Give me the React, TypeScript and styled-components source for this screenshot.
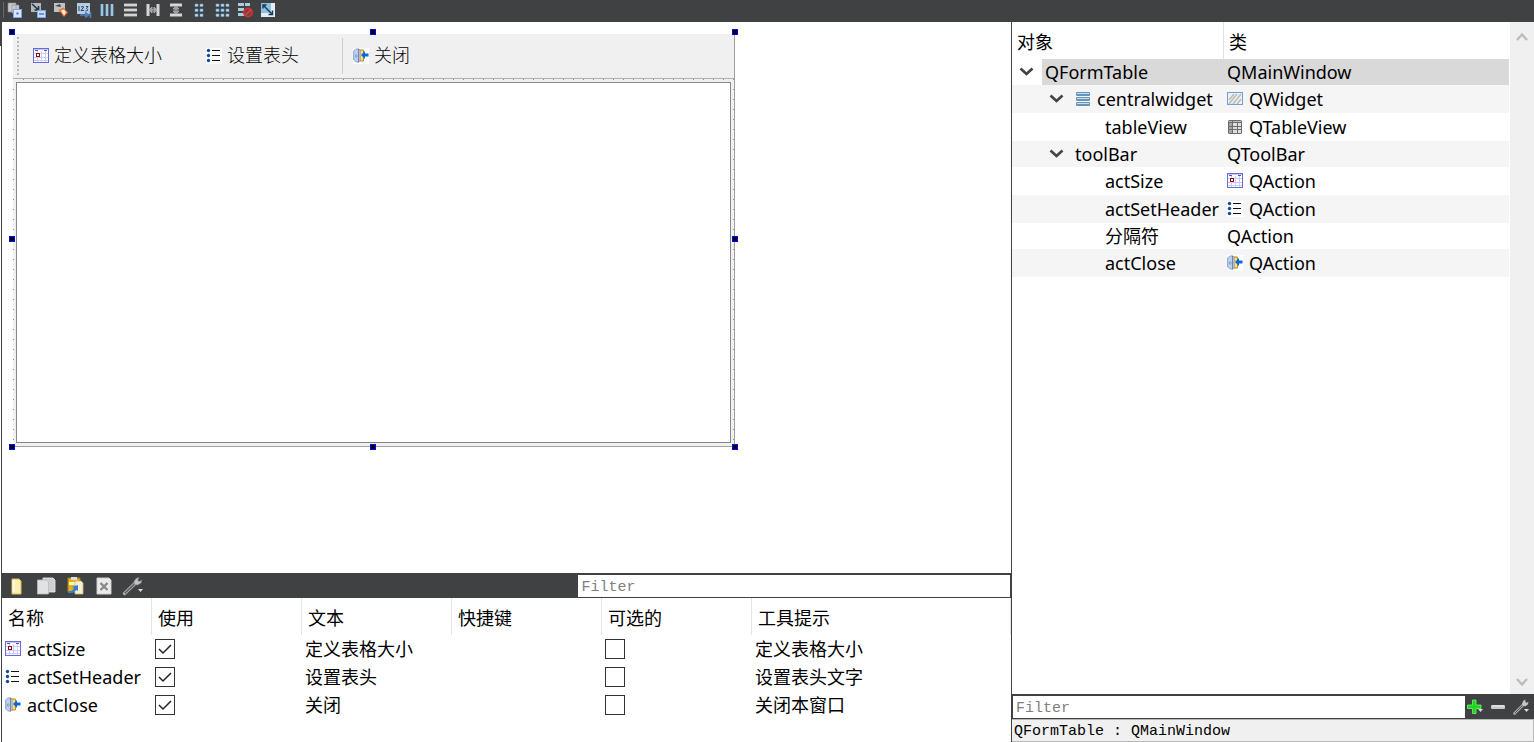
import React from 'react';
import styled, { createGlobalStyle } from 'styled-components';

const Global = createGlobalStyle`
  *, *::before, *::after { box-sizing: border-box; }
  body {
    margin: 0;
    background: #fff;
    color: #000;
    font: 18px/26px "Noto Sans", "Noto Sans CJK SC", sans-serif;
  }
  button, input { font: inherit; color: inherit; margin: 0; }
`;

const DARK = '#404142';

const Page = styled.div`
  min-height: 100vh;
  display: flex;
  flex-direction: column;
`;

const MainBar = styled.header`
  flex: none;
  height: 22px;
  display: flex;
  align-items: flex-start;
  gap: 7px;
  padding-left: 3px;
  background: ${DARK};
`;

const BarEdge = styled.span`
  width: 1px;
  height: 16px;
  margin: 2px -4px 0 0;
  background: #6a6a6a;
`;

const IconButton = styled.button<{ $w?: number; $h?: number }>`
  flex: none;
  display: flex;
  align-items: center;
  justify-content: center;
  width: ${(p) => p.$w ?? 16}px;
  height: ${(p) => p.$h ?? 20}px;
  padding: 0;
  border: 0;
  background: none;
`;

const Workspace = styled.div`
  flex: 1;
  display: grid;
  grid-template-columns: minmax(0, 1011fr) minmax(0, 523fr);
  background: linear-gradient(${DARK}, ${DARK}) 0 0 / 1px 24px no-repeat;
`;

const LeftPane = styled.main`
  display: flex;
  flex-direction: column;
  margin-left: 1px;
  border-left: 1px solid ${DARK};
`;

const RightPane = styled.aside`
  display: flex;
  flex-direction: column;
  border-left: 1px solid ${DARK};
`;

const Canvas = styled.section`
  flex: 1;
  padding: 12px 0 0 11px;
`;

const FormWindow = styled.div`
  position: relative;
  width: 722px;
  height: 413px;
  display: flex;
  flex-direction: column;
  background: #f0f0f0;
  border-right: 1px solid #a0a0a0;
  border-bottom: 1px solid #a0a0a0;
`;

const FormToolBar = styled.div`
  flex: none;
  height: 45px;
  display: flex;
  align-items: center;
  padding-left: 4px;
  border-bottom: 1px solid #b0b0b0;
  font-family: "Liberation Serif", "Noto Sans CJK SC", serif;
  font-weight: 300;
`;

const Grip = styled.span`
  width: 2px;
  height: 38px;
  margin-right: 14px;
  background: repeating-linear-gradient(#b8b8b8 0 2px, transparent 2px 4px);
`;

const FormAction = styled.button<{ $gap: number }>`
  display: flex;
  align-items: center;
  gap: 5px;
  height: 28px;
  padding: 0;
  margin-right: ${(p) => p.$gap}px;
  border: 0;
  background: none;
  white-space: nowrap;
`;

const Separator = styled.span`
  width: 1px;
  height: 36px;
  margin-right: 10px;
  background: #cfcfcf;
`;

const FormBody = styled.div`
  flex: 1;
  display: flex;
  padding: 3px;
  background:
    repeating-linear-gradient(90deg, transparent 0 9px, #909090 9px 10px) 1px 0 / 100% 1px no-repeat,
    repeating-linear-gradient(transparent 0 9px, #909090 9px 10px) 0 1px / 1px 100% no-repeat,
    repeating-linear-gradient(transparent 0 9px, #909090 9px 10px) 100% 1px / 1px 100% no-repeat,
    #f0f0f0;
`;

const TableView = styled.div`
  flex: 1;
  background: #fff;
  border: 1px solid #828790;
`;

const Handle = styled.span<{ $x: string; $y: string }>`
  position: absolute;
  left: ${(p) => p.$x};
  top: ${(p) => p.$y};
  width: 6px;
  height: 6px;
  background: #000;
  border: 1px solid #00f;
`;

const ActionBar = styled.div`
  flex: none;
  height: 25px;
  display: grid;
  grid-template-columns: minmax(0, 577fr) minmax(0, 432fr);
  padding-right: 1px;
  background: ${DARK};
`;

const ActionTools = styled.div`
  display: flex;
  align-items: center;
  gap: 5px;
  padding-left: 3px;
`;

const FilterInput = styled.input`
  width: 100%;
  height: 22px;
  align-self: center;
  padding: 3px 3px 0;
  border: 0;
  border-radius: 0;
  outline: 0;
  background: #fff;
  font: 15px/18px "Liberation Mono", monospace;
  &::placeholder { color: #808080; opacity: 1; }
`;

const ActionPanel = styled.section`
  flex: none;
  height: 144px;
`;

const ActionTable = styled.table`
  width: 100%;
  table-layout: fixed;
  border-collapse: separate;
  border-spacing: 0;
  th {
    height: 37px;
    padding: 2px 6px 0;
    text-align: left;
    font-weight: 400;
    border-right: 1px solid #e5e5e5;
    white-space: nowrap;
  }
  td {
    height: 28px;
    padding: 0 3px;
    white-space: nowrap;
  }
`;

const Cell = styled.div<{ $gap?: number; $indent?: number }>`
  display: flex;
  align-items: center;
  gap: ${(p) => p.$gap ?? 6}px;
  padding-left: ${(p) => p.$indent ?? 0}px;
  svg { flex: none; }
`;

const Check = styled.input`
  appearance: none;
  display: block;
  width: 20px;
  height: 20px;
  border: 1px solid #333;
  background: #fff;
  &:checked {
    background: #fff url("data:image/svg+xml,%3Csvg xmlns='http://www.w3.org/2000/svg' viewBox='0 0 18 18'%3E%3Cpath d='M3 9l4 4 8-8' fill='none' stroke='%23222' stroke-width='1.5'/%3E%3C/svg%3E");
  }
`;

const TreeArea = styled.div`
  flex: 1;
  display: flex;
`;

const TreeTable = styled.table`
  flex: 1;
  align-self: flex-start;
  display: table;
  table-layout: fixed;
  border-collapse: separate;
  border-spacing: 0;
  th {
    height: 37px;
    padding: 2px 5px 0;
    text-align: left;
    font-weight: 400;
    white-space: nowrap;
  }
  th:first-child { border-right: 1px solid #e0e0e0; }
  td { padding: 0 0 0 3px; white-space: nowrap; }
  td:first-child { padding: 0; }
`;

const TreeRow = styled.tr<{ $icon: boolean; $alt: boolean; $selected: boolean }>`
  height: ${(p) => (p.$icon ? 28 : 26)}px;
  background: ${(p) => (p.$alt ? '#f5f5f5' : '#fff')};
  td { background: ${(p) => (p.$selected ? '#d9d9d9' : 'transparent')}; }
  td:first-child {
    background: ${(p) => (p.$selected ? 'linear-gradient(90deg, #fff 30px, #d9d9d9 30px)' : 'transparent')};
  }
`;

const ScrollTrack = styled.div`
  flex: none;
  width: 25px;
  display: flex;
  flex-direction: column;
  justify-content: space-between;
  align-items: center;
  padding: 5px 0 2px;
  background: #f0f0f0;
  border-left: 1px solid #fff;
`;

const PropertyBar = styled.div`
  flex: none;
  height: 25px;
  display: flex;
  align-items: center;
  gap: 7px;
  padding: 0 5px 0 1px;
  background: ${DARK};
`;

const PropertyFilter = styled(FilterInput)`
  flex: 1;
  min-width: 0;
  margin-right: -5px;
`;

const StatusLine = styled.div`
  flex: none;
  height: 23px;
  padding: 0 2px;
  background: #f0f0f0;
  border: 1px solid #b8b8b8;
  border-left: 0;
  font: 15px/24px "Liberation Mono", monospace;
`;

type S = { children: React.ReactNode; w?: number; h?: number };
const Svg = ({ children, w = 16, h = 16 }: S) => (
  <svg width={w} height={h} viewBox={`0 0 ${w} ${h}`} aria-hidden="true">{children}</svg>
);

const SizeIcon = () => (
  <Svg>
    <rect width="16" height="15" fill="#fff" />
    <path d="M4.500 3v11M8.500 3v11M12.500 3v11M1 5.500h14M1 9.500h14M1 12.500h14" stroke="#ccccfa" />
    <rect x=".5" y=".5" width="15" height="14" fill="none" stroke="#6a6ad0" />
    <path d="M1 1.500h14" stroke="#c8c8f4" />
    <path d="M2 2.500h3M11 2.500h3" stroke="#5555b0" />
    <rect x="3.500" y="5.500" width="3" height="3" fill="#fff" stroke="#900010" />
  </Svg>
);

const HeaderIcon = () => (
  <Svg>
    <rect width="16" height="16" fill="#fff" />
    <path d="M6 2.500h8M6 7.500h8M6 12.500h8" stroke="#111" />
    <g fill="#1148a0">
      <circle cx="2.500" cy="2.500" r="1.700" />
      <circle cx="2.500" cy="7.500" r="1.700" />
      <circle cx="2.500" cy="12.500" r="1.700" />
    </g>
  </Svg>
);

const CloseIcon = () => (
  <Svg>
    <rect width="16" height="16" fill="#fff" />
    <path d="M6 2h4.500v11H6z" fill="#f7dc8a" stroke="#b98b1c" />
    <path d="M.6 3Q2 .8 5.500 .7v13.800Q2 14 .6 12z" fill="#b9d0f2" stroke="#7f95c5" strokeWidth=".8" />
    <path d="M5.500 1l1.500 1.500v10L5.500 14z" fill="#dfe8f8" stroke="#5a6c98" strokeWidth=".7" />
    <circle cx="3.200" cy="8" r="1" fill="#fff" stroke="#4a5c88" strokeWidth=".6" />
    <path d="M8 7l4-4v2.500h3.500v3H12V11z" fill="#0868d8" />
  </Svg>
);

const LayoutIcon = () => (
  <Svg>
    {[1, 6, 11].map((y) => (
      <g key={y}>
        <rect x="1" y={y} width="14" height="4" rx="1" fill="#6a93b8" />
        <path d={`M2 ${y + 1}.5h12`} stroke="#c2def2" />
      </g>
    ))}
  </Svg>
);

const WidgetIcon = () => (
  <Svg>
    <rect x=".5" y="1.500" width="15" height="12" fill="#f0f0ee" stroke="#6f9ddc" />
    <path d="M2 9l5-6M2 13l8-10M6 13l8-10M10 13l4-5" stroke="#bcbcb8" strokeWidth="1.600" />
  </Svg>
);

const GridIcon = () => (
  <Svg>
    <rect x="1" y="1" width="14" height="14" rx="1.500" fill="#6c6c6c" />
    <path d="M2 2.500h3M6 2.500h8" stroke="#bbb" />
    <path d="M2 4h3v3H2zM2 8h3v2H2zM2 11h3v3H2z" fill="#a6a6a6" />
    <path d="M6 4h4v3H6zM11 4h3v3h-3zM6 8h4v2H6zM11 8h3v2h-3zM6 11h4v3H6zM11 11h3v3h-3z" fill="#dedede" />
  </Svg>
);

const Chevron = () => (
  <Svg w={15} h={10}><path d="M1.500 1.500l6 5.500 6-5.500" fill="none" stroke="#444" strokeWidth="2.600" /></Svg>
);

const ScrollArrow = ({ up = false }: { up?: boolean }) => (
  <Svg w={14} h={20}>
    <path d={up ? 'M2 13l5-5.500 5 5.500' : 'M2 7l5 5.500 5-5.500'} fill="none" stroke="#bcbcbc" strokeWidth="2.400" />
  </Svg>
);

const Wrench = () => (
  <Svg w={22} h={20}>
    <path d="M2.500 17.500L13 7.500" stroke="#aaa" strokeWidth="3.400" strokeLinecap="round" />
    <path d="M2.800 17.200L13 7.500" stroke="#555" strokeWidth="1.200" />
    <path d="M17 1.500l-3 1-2 3 .5 3 3 .5 3.500-2 .8-3-2.300 1.500-1.800-1z" fill="#c4c4c4" stroke="#8a8a8a" strokeWidth=".6" />
    <path d="M16 13h5l-2.500 3z" fill="#ddd" />
  </Svg>
);

const SmallWrench = () => (
  <Svg>
    <path d="M1.500 14.500L10 6" stroke="#aaa" strokeWidth="2.600" strokeLinecap="round" />
    <path d="M1.800 14.200L10 6" stroke="#555" />
    <path d="M12.500 .5l-2.500 1.500-1 3 1 2 2.500.3 2.500-2 .5-2.500-1.800 1-1.300-.8z" fill="#c4c4c4" />
    <path d="M11 10h5l-2.500 3z" fill="#ddd" />
  </Svg>
);

const Plus = () => (
  <Svg>
    <path d="M5.500 1h3.500v5h5v3.500h-5v5H5.500v-5h-5V6h5z" fill="#18d818" stroke="#7cf07c" strokeWidth=".8" />
    <path d="M11 10h5l-2.500 3z" fill="#ddd" />
  </Svg>
);

const Minus = () => (
  <Svg><rect x="1" y="6" width="14" height="4" rx="1" fill="#c9c9c9" /><path d="M2 7h12" stroke="#eee" /></Svg>
);

const mainTools: [string, React.ReactNode][] = [
  ['Edit Widgets', <>
    <path d="M1 1h8v9H1zM5 3h7v8H5z" fill="#c6c8ca" stroke="#8b8d90" strokeWidth=".6" />
    <rect x="6.500" y="7.500" width="8" height="8" fill="#d8e6ff" stroke="#7da2e8" />
    <rect x="9.500" y="10.500" width="2" height="2" fill="#3464c8" />
  </>],
  ['Edit Signals/Slots', <>
    <path d="M1 1h10v9H1z" fill="#b4b8bb" />
    <path d="M2 2l6 5.500M8.500 4v4H4.500" stroke="#183848" strokeWidth="1.600" fill="none" />
    <rect x="7.500" y="8.500" width="8" height="7" fill="#c9dcfa" stroke="#7da2e8" />
    <path d="M9 12h5" stroke="#4a78c8" strokeWidth="1.500" />
  </>],
  ['Edit Buddies', <>
    <path d="M1 1h11v9H1z" fill="#bfc1c3" />
    <path d="M2 4l5-2 1 3z" fill="#444" />
    <path d="M5.500 8l5-2.500 4.500 5-4 4.500z" fill="#f07030" />
    <path d="M8 8.500l3-1 2 3-2 3z" fill="#fff0e0" />
  </>],
  ['Edit Tab Order', <>
    <path d="M1 1h13v11H1z" fill="#b9cbdc" />
    <path d="M3 4v5M5 5q3.500-1.500 2 1l-2 2.500h3M10 4.500h2L10.500 6.500q3 2-1 2.500" fill="none" stroke="#1a4a78" />
    <path d="M4 13h7M9 10.500l3.500 2.500L9 15.500M14.500 10v6" fill="none" stroke="#4d83c4" strokeWidth="1.600" />
  </>],
  ['Lay Out Horizontally', <>
    <path d="M3 2v12M8 2v12M13 2v12" stroke="#6b9fc4" strokeWidth="3" />
    <path d="M3 2v12M8 2v12M13 2v12" stroke="#d4ebfb" />
  </>],
  ['Lay Out Vertically', <>
    <path d="M2 3h13M2 8h13M2 13h13" stroke="#b4b4b2" strokeWidth="3" />
    <path d="M2 3h13M2 8h13M2 13h13" stroke="#f2f2f0" />
  </>],
  ['Horizontal Splitter', <>
    <path d="M3 2v12M13 2v12" stroke="#d6d6d6" strokeWidth="3" />
    <path d="M4 8l3-3v6zM12 8L9 5v6zM6 8h4" fill="#999" stroke="#aaa" />
  </>],
  ['Vertical Splitter', <>
    <path d="M2 3h12M2 13h12" stroke="#d6d6d6" strokeWidth="3" />
    <path d="M8 4L5 7h6zM8 12L5 9h6zM8 6v4" fill="#999" stroke="#aaa" />
  </>],
  ['Form Layout', <>
    {[2, 7, 12].map((y) => <path key={y} d={`M4 ${y}h3v2.500H4zM9 ${y}h3v2.500H9z`} fill="#bcdcf2" stroke="#6b9fc4" strokeWidth=".6" />)}
  </>],
  ['Grid Layout', <>
    {[2, 7, 12].map((y) => <path key={y} d={`M2 ${y}h3v2.500H2zM7 ${y}h3v2.500H7zM12 ${y}h3v2.500h-3z`} fill="#bcdcf2" stroke="#6b9fc4" strokeWidth=".6" />)}
  </>],
  ['Break Layout', <>
    <path d="M1 1h6v3H1zM8 1h5v3H8zM1 6h6v3H1zM1 11h6v3H1z" fill="#a9cde6" />
    <circle cx="11" cy="10.500" r="4.200" fill="#7c4040" stroke="#d83030" strokeWidth="1.600" />
    <path d="M8 13.500l6-6" stroke="#e04040" strokeWidth="1.600" />
  </>],
  ['Adjust Size', <>
    <rect x="1" y="1" width="14" height="14" fill="#e4ecf4" />
    <path d="M1 1h10v10H1z" fill="#8fc0e4" />
    <path d="M4 4l8 8M3 6.500V3h3.500M12.500 8.500V12.500H8.500" stroke="#14384c" strokeWidth="1.400" fill="none" />
  </>],
];

const actionTools: [string, React.ReactNode][] = [
  ['New', <><path d="M5 3h7l2 2v13H5z" fill="#fbeeb0" stroke="#d9bd62" /><path d="M6.500 4v12" stroke="#fffbe4" strokeWidth="2" /></>],
  ['Copy', <><path d="M7 2h10l2 2v12H7z" fill="#cfcfcf" stroke="#eee" strokeWidth=".8" /><path d="M1.500 4h9l2 2v12h-11z" fill="#e2e2e2" stroke="#bbb" strokeWidth=".8" /></>],
  ['Paste', <>
    <path d="M3 2h12v14H3z" fill="#e0b020" stroke="#a87c10" />
    <path d="M6 1h6v3H6z" fill="#ddd" /><path d="M4 6h7v3H4z" fill="#fff3b8" />
    <path d="M10 5h6l2 2v11h-8z" fill="#f8efcf" stroke="#c8b888" strokeWidth=".8" />
    <path d="M3 15q4 1 6-3l-2-1 6-2v6l-2-1q-3 4-8 3z" fill="#2f7fd8" />
  </>],
  ['Delete', <><path d="M3 2h12l2 2v14H3z" fill="#ebebeb" stroke="#ccc" /><path d="M6.500 7l7 7M13.500 7l-7 7" stroke="#888" strokeWidth="2.400" /></>],
];

const actions = [
  { icon: <SizeIcon />, name: 'actSize', text: '定义表格大小', tip: '定义表格大小' },
  { icon: <HeaderIcon />, name: 'actSetHeader', text: '设置表头', tip: '设置表头文字' },
  { icon: <CloseIcon />, name: 'actClose', text: '关闭', tip: '关闭本窗口' },
];

type Node = { name: string; cls: string; indent: number; open?: boolean; nameIcon?: React.ReactNode; icon?: React.ReactNode };
const nodes: Node[] = [
  { name: 'QFormTable', cls: 'QMainWindow', indent: 7, open: true },
  { name: 'centralwidget', cls: 'QWidget', indent: 37, open: true, nameIcon: <LayoutIcon />, icon: <WidgetIcon /> },
  { name: 'tableView', cls: 'QTableView', indent: 93, icon: <GridIcon /> },
  { name: 'toolBar', cls: 'QToolBar', indent: 37, open: true },
  { name: 'actSize', cls: 'QAction', indent: 93, icon: <SizeIcon /> },
  { name: 'actSetHeader', cls: 'QAction', indent: 93, icon: <HeaderIcon /> },
  { name: '分隔符', cls: 'QAction', indent: 93 },
  { name: 'actClose', cls: 'QAction', indent: 93, icon: <CloseIcon /> },
];

const xs = ['-4px', '357px', '719px'];
const ys = ['-5px', '202px', '410px'];

export default function App() {
  return (
    <Page>
      <Global />
      <MainBar>
        <BarEdge />
        {mainTools.map(([label, art]) => (
          <IconButton key={label} aria-label={label}><Svg>{art}</Svg></IconButton>
        ))}
      </MainBar>
      <Workspace>
        <LeftPane>
          <Canvas>
            <FormWindow>
              <FormToolBar>
                <Grip />
                <FormAction $gap={44}><SizeIcon />定义表格大小</FormAction>
                <FormAction $gap={43}><HeaderIcon />设置表头</FormAction>
                <Separator />
                <FormAction $gap={0}><CloseIcon />关闭</FormAction>
              </FormToolBar>
              <FormBody><TableView /></FormBody>
              {ys.map((y, r) => xs.map((x, c) => (r === 1 && c === 1 ? null : <Handle key={x + y} $x={x} $y={y} />)))}
            </FormWindow>
          </Canvas>
          <ActionBar>
            <ActionTools>
              {actionTools.map(([label, art]) => (
                <IconButton key={label} aria-label={label} $w={24}><Svg w={20} h={20}>{art}</Svg></IconButton>
              ))}
              <IconButton aria-label="Configure" $w={24}><Wrench /></IconButton>
            </ActionTools>
            <FilterInput aria-label="Filter actions" placeholder="Filter" />
          </ActionBar>
          <ActionPanel>
            <ActionTable>
              <colgroup>
                {[0, 1, 2, 3, 4].map((i) => <col key={i} width="150" />)}
                <col />
              </colgroup>
              <thead>
                <tr>{['名称', '使用', '文本', '快捷键', '可选的', '工具提示'].map((h) => <th key={h} scope="col">{h}</th>)}</tr>
              </thead>
              <tbody>
                {actions.map((a) => (
                  <tr key={a.name}>
                    <td><Cell>{a.icon}{a.name}</Cell></td>
                    <td><Check type="checkbox" defaultChecked aria-label={`${a.name} 使用`} /></td>
                    <td>{a.text}</td>
                    <td />
                    <td><Check type="checkbox" aria-label={`${a.name} 可选的`} /></td>
                    <td>{a.tip}</td>
                  </tr>
                ))}
              </tbody>
            </ActionTable>
          </ActionPanel>
        </LeftPane>
        <RightPane>
          <TreeArea>
            <TreeTable>
              <colgroup><col width="212" /><col /></colgroup>
              <thead><tr><th scope="col">对象</th><th scope="col">类</th></tr></thead>
              <tbody>
                {nodes.map((n, i) => (
                  <TreeRow key={n.name} $icon={!!n.icon} $alt={i % 2 === 1} $selected={i === 0}>
                    <td>
                      <Cell $indent={n.indent} $gap={n.nameIcon ? 6 : 11}>
                        {n.open && <Chevron />}
                        {n.nameIcon && <Cell $indent={5}>{n.nameIcon}</Cell>}
                        {n.name}
                      </Cell>
                    </td>
                    <td><Cell>{n.icon}{n.cls}</Cell></td>
                  </TreeRow>
                ))}
              </tbody>
            </TreeTable>
            <ScrollTrack><ScrollArrow up /><ScrollArrow /></ScrollTrack>
          </TreeArea>
          <PropertyBar>
            <PropertyFilter aria-label="Filter properties" placeholder="Filter" />
            <IconButton aria-label="Add"><Plus /></IconButton>
            <IconButton aria-label="Remove"><Minus /></IconButton>
            <IconButton aria-label="Configure"><SmallWrench /></IconButton>
          </PropertyBar>
          <StatusLine>QFormTable : QMainWindow</StatusLine>
        </RightPane>
      </Workspace>
    </Page>
  );
}
